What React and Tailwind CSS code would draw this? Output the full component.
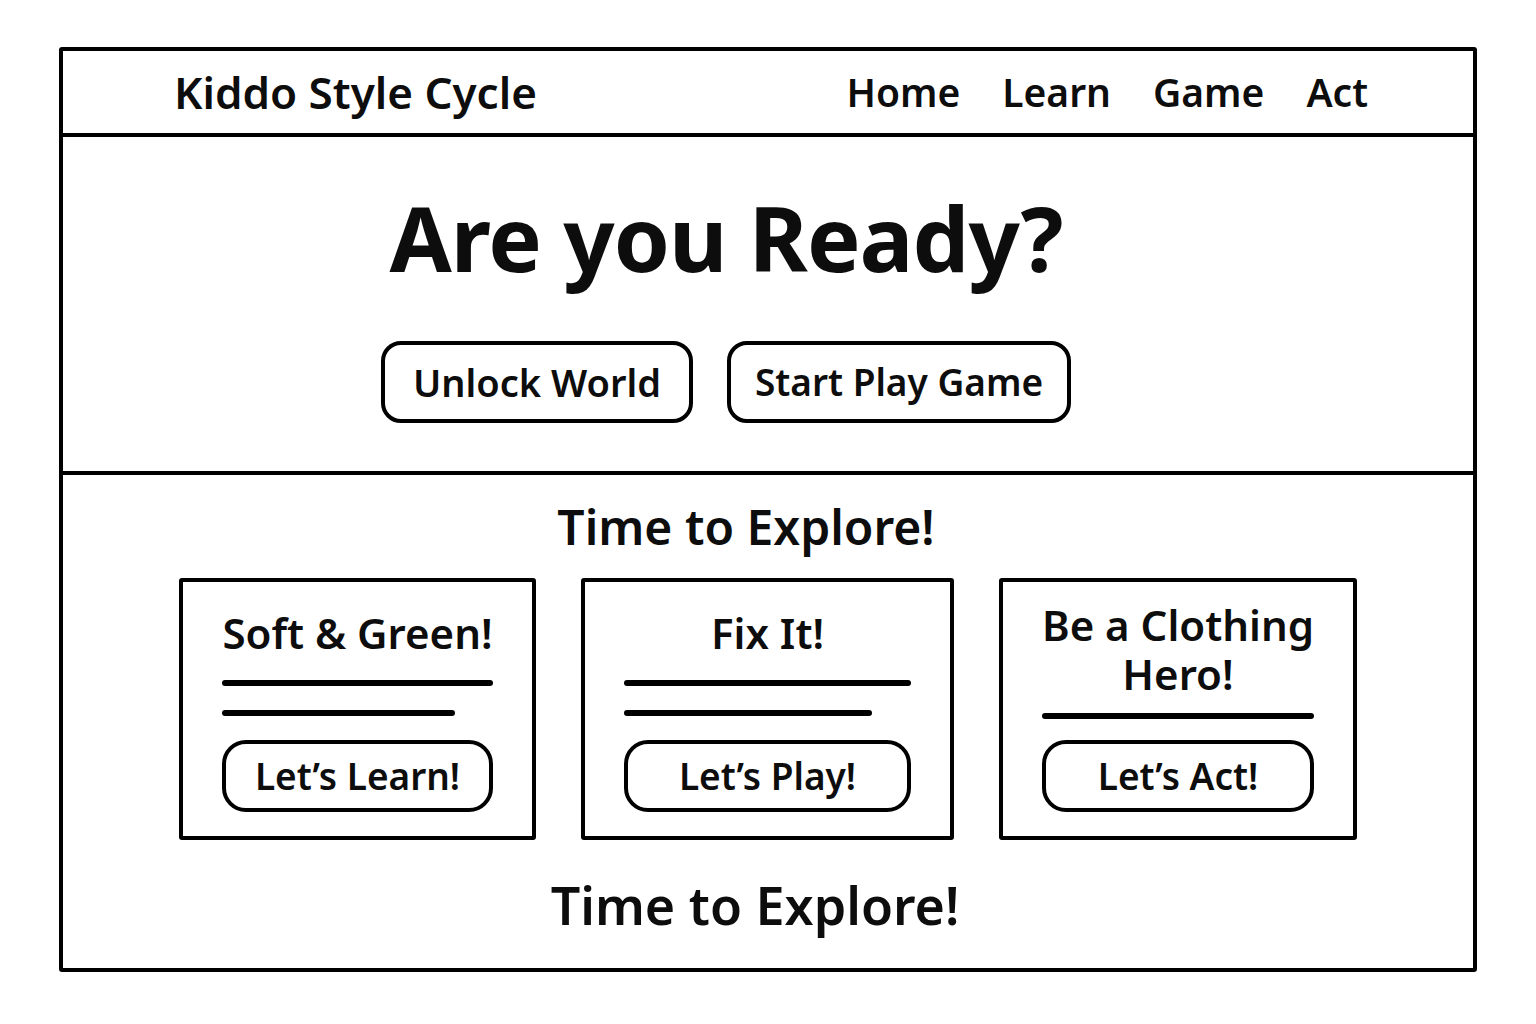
import React from 'react';

const font = { fontFamily: '"Noto Sans", "Open Sans", sans-serif' };

function Card({ title, lines, button, width, titleGap = 'mb-6', lineGap = 'mb-6', leading = 'leading-[47px]' }) {
  return (
    <div className={`flex flex-col justify-end border-4 border-black rounded-[3px] px-[39px] pb-[24px] h-[262px] ${width}`}>
      <h3 className={`-mx-[30px] whitespace-nowrap text-center text-[42px] font-semibold ${leading} ${titleGap}`}>{title}</h3>
      <div className={`flex flex-col gap-6 ${lineGap}`}>
        {lines.map((w, i) => (
          <div key={i} className={`h-[6px] rounded-full bg-black ${w}`}></div>
        ))}
      </div>
      <button className="h-[72px] w-full rounded-[24px] border-4 border-black text-[37px] font-semibold">
        {button}
      </button>
    </div>
  );
}

export default function App() {
  return (
    <div className="min-h-screen bg-white text-[#0d0d0d] pt-[47px] pl-[59px]" style={font}>
      <div className="w-[1418px] border-4 border-black rounded-[3px]">
        {/* Header */}
        <header className="h-[86px] border-b-4 border-black flex items-center justify-between pl-[111px] pr-[105px]">
          <div className="text-[44px] font-semibold">Kiddo Style Cycle</div>
          <nav className="flex gap-[42px] text-[39px] font-semibold">
            <a>Home</a>
            <a>Learn</a>
            <a>Game</a>
            <a>Act</a>
          </nav>
        </header>

        {/* Hero */}
        <section className="border-b-4 border-black flex flex-col items-center pt-[54px] pb-[48px] pr-[84px]">
          <h1 className="text-[90px] leading-[92px] font-bold tracking-[-1px]">Are you Ready?</h1>
          <div className="flex gap-[34px] mt-[58px]">
            <button className="h-[82px] w-[312px] rounded-[20px] border-4 border-black text-[38px] font-semibold">
              Unlock World
            </button>
            <button className="h-[82px] w-[344px] rounded-[20px] border-4 border-black text-[37px] font-semibold">
              Start Play Game
            </button>
          </div>
        </section>

        {/* Explore */}
        <section className="flex flex-col items-center pt-[24px] pb-[33px]">
          <h2 className="text-[48px] leading-[56px] font-semibold mr-[44px]">Time to Explore!</h2>
          <div className="flex gap-[45px] mt-[23px]">
            <Card title="Soft & Green!" lines={['w-full', 'w-[233px]']} button="Let’s Learn!" width="w-[357px]" />
            <Card title="Fix It!" lines={['w-full', 'w-[248px]']} button="Let’s Play!" width="w-[373px]" />
            <Card
              title={<>Be a Clothing<br />Hero!</>}
              lines={['w-full']}
              button="Let’s Act!"
              width="w-[358px]"
              leading="leading-[49px]"
              titleGap="mb-[15px]"
              lineGap="mb-[21px]"
            />
          </div>
          <h2 className="text-[52px] leading-[60px] font-semibold mt-[35px] mr-[26px]">Time to Explore!</h2>
        </section>
      </div>
    </div>
  );
}
